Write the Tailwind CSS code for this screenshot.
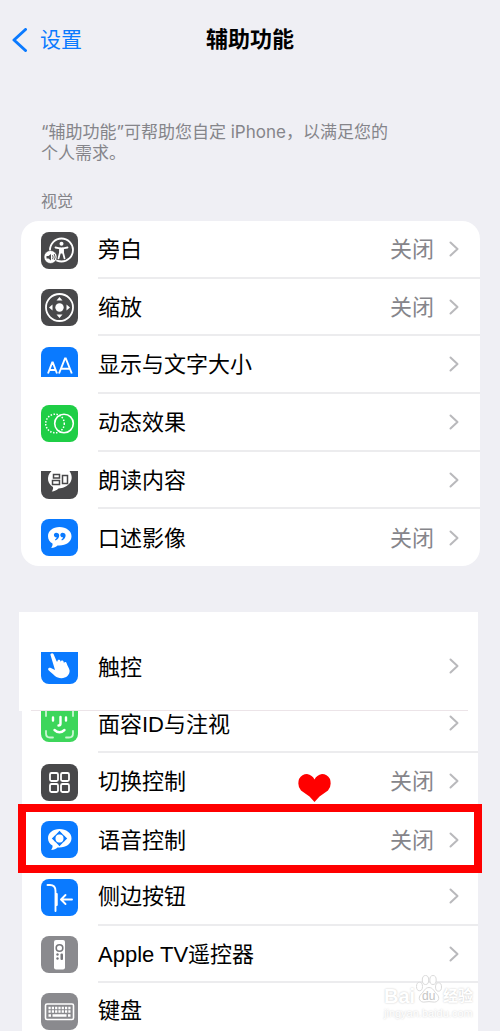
<!DOCTYPE html>
<html lang="zh-CN">
<head>
<meta charset="utf-8">
<meta name="viewport" content="width=device-width, initial-scale=1">
<title>辅助功能</title>
<script src="https://cdn.jsdelivr.net/npm/@tailwindcss/browser@4"></script>
</head>
<body class="bg-[#efeff4] font-['Liberation_Sans','Noto_Sans_CJK_SC',sans-serif] text-black">
<svg class="hidden" aria-hidden="true">
  <symbol id="chev" viewBox="0 0 10 16"><path d="M1.500 1.500 8.500 8l-7 6.500" fill="none" stroke="#b9b9bc" stroke-width="2" stroke-linecap="round" stroke-linejoin="round"/></symbol>
  <symbol id="bubble" viewBox="0 0 37 37"><path d="M18.500 8C11.800 8 7 12 7 17.200c0 3.200 1.700 5.800 4.500 7.400.3 1.500-.3 3-1.300 4.400 2.700-.1 4.800-1.200 6.300-2.600 7.700.8 14-3.400 14-9.200C30.500 12 25.200 8 18.500 8Z" fill="#fff"/></symbol>
</svg>

<div class="overflow-hidden">
  <header class="grid grid-cols-3 items-center h-20 px-3">
    <a href="#" class="flex items-center gap-3 text-[21px] leading-8 text-[#0a7aff]">
      <svg class="w-4 h-6" viewBox="0 0 16 24" fill="none" stroke="#0a7aff" stroke-width="3" stroke-linecap="round" stroke-linejoin="round"><path d="M13.500 1.500 2 12l11.500 10.500"/></svg>设置</a>
    <h1 class="text-center text-[22px] leading-8 font-bold whitespace-nowrap">辅助功能</h1>
  </header>

  <main>
    <p class="mt-[42px] pl-[41px] pr-[100px] font-['Inter','Noto_Sans_CJK_SC',sans-serif] text-[17px] leading-[21px] text-[#85858a]"><span class="whitespace-nowrap">“辅助功能”可帮助您自定 iPhone，以满足您的</span><br>个人需求。</p>
    <h2 class="mt-[26px] pl-[41px] text-[16px] leading-6 text-[#85858a]">视觉</h2>

    <nav class="mt-[7px] ml-[21px] mr-5 bg-white rounded-[18px] text-[22px] leading-8" aria-label="视觉">
      <a href="#" class="flex h-[58px] pl-5 items-center gap-5">
        <svg class="w-[37px] h-[37px] shrink-0" viewBox="0 0 37 37"><rect width="37" height="37" rx="8" fill="#48484a"/><circle cx="20.500" cy="18" r="11.500" fill="none" stroke="#fff" stroke-width="1.800"/><circle cx="20.500" cy="11.800" r="2" fill="#fff"/><path d="M14.500 15.500l4.500.9v4l-1.500 6M26.500 15.500l-4.500.9v4l1.500 6" fill="none" stroke="#fff" stroke-width="1.800" stroke-linecap="round"/><path d="M18.500 15.500h4v6h-4z" fill="#fff"/><circle cx="9.500" cy="25" r="6.500" fill="#fff" stroke="#48484a" stroke-width=".6"/><path d="M5.500 24h2l2.500-2v6.500l-2.500-2h-2z" fill="#48484a"/><path d="M11.500 23.200q1.200 2 0 4M13.200 22q2 3.200 0 6" fill="none" stroke="#48484a" stroke-width=".9"/></svg>
        <span class="flex flex-1 h-full items-center border-b-2 border-[#ececee] pr-[21px]"><span class="flex-1 pt-0.5">旁白</span><span class="text-[#85858a] mr-[15px] pt-0.5">关闭</span><svg class="w-[10px] h-4"><use href="#chev"/></svg></span>
      </a>
      <a href="#" class="flex h-[57px] pl-5 items-center gap-5">
        <svg class="w-[37px] h-[37px] shrink-0" viewBox="0 0 37 37"><rect width="37" height="37" rx="8" fill="#48484a"/><circle cx="18.500" cy="18.500" r="13.500" fill="none" stroke="#fff" stroke-width="1.800"/><circle cx="18.500" cy="18.500" r="4.200" fill="#fff"/><path d="M18.500 8l3 3.500h-6zM18.500 29l3-3.500h-6zM8 18.500l3.500-3v6zM29 18.500l-3.500-3v6z" fill="#fff"/></svg>
        <span class="flex flex-1 h-full items-center border-b-2 border-[#ececee] pr-[21px]"><span class="flex-1 pt-0.5">缩放</span><span class="text-[#85858a] mr-[15px] pt-0.5">关闭</span><svg class="w-[10px] h-4"><use href="#chev"/></svg></span>
      </a>
      <a href="#" class="flex h-[58px] pl-5 items-center gap-5">
        <svg class="w-[37px] h-[37px] shrink-0" viewBox="0 0 37 37"><path d="M0 30V8a8 8 0 0 1 8-8h21a8 8 0 0 1 8 8v22z" fill="#0a7aff"/><path d="M7 26.500l4.200-11h.6l4.200 11M8.500 23h6M18 26.500l6-15h.8l6 15M20.200 21.800h8.400" fill="none" stroke="#fff" stroke-width="1.900"/></svg>
        <span class="flex flex-1 h-full items-center border-b-2 border-[#ececee] pr-[21px]"><span class="flex-1 pt-0.5">显示与文字大小</span><svg class="w-[10px] h-4"><use href="#chev"/></svg></span>
      </a>
      <a href="#" class="flex h-[58px] pl-5 items-center gap-5">
        <svg class="w-[37px] h-[37px] shrink-0" viewBox="0 0 37 37"><rect width="37" height="37" rx="8" fill="#1fce46"/><circle cx="23" cy="18.500" r="9.300" fill="none" stroke="#fff" stroke-width="1.600"/><circle cx="14" cy="18.500" r="9.300" fill="none" stroke="#fff" stroke-width="1.500" stroke-dasharray="1.500 1.500"/></svg>
        <span class="flex flex-1 h-full items-center border-b-2 border-[#ececee] pr-[21px]"><span class="flex-1 pt-0.5">动态效果</span><svg class="w-[10px] h-4"><use href="#chev"/></svg></span>
      </a>
      <a href="#" class="flex h-[57px] pl-5 items-center gap-5">
        <svg class="w-[37px] h-[37px] shrink-0" viewBox="0 0 37 37"><path d="M0 9h37v20a8 8 0 0 1-8 8H8a8 8 0 0 1-8-8z" fill="#48484a"/><path d="M10.500 9h18c6 9-1 17-11 17.500-1.800 1.700-4 2.900-6.800 3 1.200-1.400 1.600-3 1.300-4.500C7 22 4.500 15 10.500 9Z" fill="#fff"/><path d="M12.500 12.500h6v3.500h-6zM11.500 18.500h7v4h-7zM21.500 13.500h5v8h-5z" fill="none" stroke="#48484a" stroke-width="1.500"/></svg>
        <span class="flex flex-1 h-full items-center border-b-2 border-[#ececee] pr-[21px]"><span class="flex-1 pt-0.5">朗读内容</span><svg class="w-[10px] h-4"><use href="#chev"/></svg></span>
      </a>
      <a href="#" class="flex h-[57px] pl-5 items-center gap-5">
        <svg class="w-[37px] h-[37px] shrink-0" viewBox="0 0 37 37"><rect width="37" height="37" rx="8" fill="#0a7aff"/><use href="#bubble"/><path d="M16.200 14a2.300 2.300 0 1 0-.5 4.300q-.2 1.500-1.700 2.300l.5.900c2.500-1 3.800-3 3.700-5.200 0-1.100-.9-2.300-2-2.300ZM22.600 14a2.300 2.300 0 1 0-.5 4.300q-.2 1.500-1.700 2.300l.5.900c2.500-1 3.800-3 3.700-5.200 0-1.100-.9-2.300-2-2.300Z" fill="#0a7aff"/></svg>
        <span class="flex flex-1 h-full items-center pr-[21px]"><span class="flex-1 pt-0.5">口述影像</span><span class="text-[#85858a] mr-[15px] pt-0.5">关闭</span><svg class="w-[10px] h-4"><use href="#chev"/></svg></span>
      </a>
    </nav>

    <nav class="mt-[46px] text-[22px] leading-8" aria-label="动作交互">
      <a href="#" class="flex h-[99px] ml-[19px] mr-[22px] pt-2 pl-[22px] items-center gap-5 bg-white relative">
        <svg class="w-[37px] h-[37px] shrink-0" viewBox="0 0 37 37"><path d="M0 5h37v24a8 8 0 0 1-8 8H8a8 8 0 0 1-8-8z" fill="#0a7aff"/><path d="M9.500 8c-.5-1.700 2.300-2.500 3-.9l3.200 7.300.8.100c-.2-2.300 2.400-2.500 3-.4l.3.900c.1-1.900 2.400-1.900 2.900 0l.3 1.200c.2-1.600 2.200-1.500 2.700.3.600 2.200 2.600 4.500 2.900 7 .3 4.300-3.300 7.700-8.200 7.700-5.300 0-7.600-3.700-12.300-7.500-2-1.600-.4-3.800 1.800-2.800l4.100 2.100z" fill="#fff"/></svg>
        <span class="flex flex-1 items-center pr-[19px]"><span class="flex-1 pt-1">触控</span><svg class="w-[10px] h-4"><use href="#chev"/></svg></span>
        <span class="absolute left-3 right-[10px] bottom-0 h-px bg-[#ece4e8]"></span>
      </a>
      <div class="ml-[22px] mr-[22px] bg-white relative">
        <a href="#" class="flex h-[42px] pl-[19px] gap-5">
          <svg class="w-[37px] h-[31px] shrink-0" viewBox="0 6 37 31"><path d="M0 6h37v23a8 8 0 0 1-8 8H8a8 8 0 0 1-8-8z" fill="#3dd65b"/><path d="M5 6v5M32 6v5M5 26v2.500q0 4 4 4h3M32 26v2.500q0 4-4 4h-3" fill="none" stroke="#c9f5d2" stroke-width="1.800" stroke-linecap="round"/><path d="M12 12.500v3M25 12.500v3M19.500 12v6.500q0 2-2 2M13.500 25q5 4.500 10 0" fill="none" stroke="#fff" stroke-width="2.400" stroke-linecap="round"/></svg>
          <span class="flex flex-1 h-full items-start border-b-2 border-[#ececee] pr-[19px]"><span class="flex-1 leading-7">面容ID与注视</span><svg class="w-[10px] h-4 mt-1"><use href="#chev"/></svg></span>
        </a>
        <a href="#" class="flex h-[58px] pl-[19px] items-center gap-5 relative">
          <svg class="w-[37px] h-[37px] shrink-0" viewBox="0 0 37 37"><rect width="37" height="37" rx="8" fill="#48484a"/><g fill="none" stroke="#fff" stroke-width="1.800"><rect x="9" y="9" width="8" height="8" rx="1.500"/><rect x="20" y="9" width="8" height="8" rx="1.500"/><rect x="9" y="20" width="8" height="8" rx="1.500"/><rect x="20" y="20" width="8" height="8" rx="1.500"/></g></svg>
          <span class="flex flex-1 h-full items-center border-b-2 border-[#ececee] pr-[19px]"><span class="flex-1 pt-0.5">切换控制</span><span class="text-[#85858a] mr-[15px] pt-0.5">关闭</span><svg class="w-[10px] h-4"><use href="#chev"/></svg></span>
          <svg class="absolute right-[147px] top-[21px] w-[33px] h-7" viewBox="0 0 33 28"><path d="M16.500 28 11.500 22.500 3 16.500Q-1 12 1 5 4 0 9 0 14.500 1 16.500 5.500 18.500 1 24 0q5 0 8 5 2 7-2 11.500l-8.500 6z" fill="#f00"/></svg>
        </a>
        <a href="#" class="flex h-[57px] pl-[19px] items-center gap-5 relative">
          <svg class="w-[37px] h-[37px] shrink-0" viewBox="0 0 37 37"><rect width="37" height="37" rx="8" fill="#0a7aff"/><use href="#bubble"/><path d="M18.500 9.800l3.200 3.400h-6.400zM18.500 25.200l3.200-3.400h-6.400zM10.800 17.500l3.400-3.200v6.400zM26.200 17.500l-3.400-3.200v6.400z" fill="#0a7aff"/><circle cx="18.500" cy="17.500" r="4.800" fill="none" stroke="#0a7aff" stroke-width="1.300"/></svg>
          <span class="flex flex-1 h-full items-center pr-[19px]"><span class="flex-1 pt-0.5">语音控制</span><span class="text-[#85858a] mr-[15px] pt-0.5">关闭</span><svg class="w-[10px] h-4"><use href="#chev"/></svg></span>
          <span class="absolute -left-1 -right-1 -top-[7px] -bottom-[5px] border-8 border-[#f00]"></span>
        </a>
        <a href="#" class="flex h-[58px] pl-[19px] items-center gap-5">
          <svg class="w-[37px] h-[37px] shrink-0" viewBox="0 0 37 37"><rect width="37" height="37" rx="8" fill="#0a7aff"/><path d="M6.500 6h2.500q5.500 0 5.500 6v20M15.800 15v11M31 20.500H20.500M24.500 16l-4.500 4.500 4.500 4.500" fill="none" stroke="#fff" stroke-width="1.900" stroke-linecap="round" stroke-linejoin="round"/></svg>
          <span class="flex flex-1 h-full items-center border-b-2 border-[#ececee] pr-[19px]"><span class="flex-1 pt-0.5">侧边按钮</span><svg class="w-[10px] h-4"><use href="#chev"/></svg></span>
        </a>
        <a href="#" class="flex h-[57px] pl-[19px] items-center gap-5">
          <svg class="w-[37px] h-[37px] shrink-0" viewBox="0 0 37 37"><rect width="37" height="37" rx="8" fill="#8a8a8e"/><rect x="13" y="4" width="11" height="29.500" rx="2" fill="#fff"/><circle cx="18.500" cy="12" r="3.300" fill="none" stroke="#77777b" stroke-width="1.600"/><g fill="#77777b"><circle cx="16.500" cy="18.500" r="1.200"/><circle cx="16.500" cy="22.500" r="1.200"/><rect x="19.500" y="17.500" width="2.500" height="6.500" rx="1"/></g></svg>
          <span class="flex flex-1 h-full items-center border-b-2 border-[#ececee] pr-[19px]"><span class="flex-1 pt-0.5">Apple TV遥控器</span><svg class="w-[10px] h-4"><use href="#chev"/></svg></span>
        </a>
        <a href="#" class="flex h-12 pt-[10px] pl-[19px] items-start gap-5">
          <svg class="w-[37px] h-[37px] shrink-0" viewBox="0 0 37 37"><rect width="37" height="37" rx="8" fill="#8a8a8e"/><rect x="4.500" y="11" width="28" height="15.500" rx="1.500" fill="none" stroke="#fff" stroke-width="1.600"/><path d="M7.500 15h22M7.500 18.500h22" stroke="#fff" stroke-width="2.300" stroke-dasharray="2.200 1.100"/><path d="M7.500 22.500h2.500M11.500 22.500h14M27 22.500h2.500" stroke="#fff" stroke-width="2.300"/></svg>
          <span class="pt-0.5">键盘</span>
        </a>
        <!-- watermark over the last row -->
        <div class="absolute right-[5px] bottom-3 w-[89px] font-bold text-white">
          <div class="flex items-end justify-between text-[20px] leading-[14px] [text-shadow:0_0_2px_#c4c4c4]">
            <span>Bai</span>
            <svg class="w-[26px] h-7" viewBox="0 0 26 28" fill="#fff" stroke="#dadada"><ellipse cx="3.500" cy="11.500" rx="3" ry="4.200"/><ellipse cx="9.500" cy="5" rx="3.200" ry="4.500"/><ellipse cx="17" cy="5" rx="3.200" ry="4.500"/><ellipse cx="22.500" cy="12" rx="3" ry="4.200"/><path d="M13 12.500c-4 0-5 4-7.500 6.200C1 23 4 28 9 27q4-.8 8 0c5 1 8-4 3.500-8.300C18 16.500 17 12.500 13 12.500Z"/><text x="6" y="24.500" font-size="12" font-weight="400" fill="#c4c4c4" stroke="none" class="[text-shadow:none]">du</text></svg>
            <span class="text-[15px]">经验</span>
          </div>
          <div class="mt-1 font-normal text-[11px] leading-3 [text-shadow:0_0_2px_#c8c8c8]">jingyan.baidu.com</div>
        </div>
      </div>
    </nav>
  </main>
</div>
</body>
</html>
